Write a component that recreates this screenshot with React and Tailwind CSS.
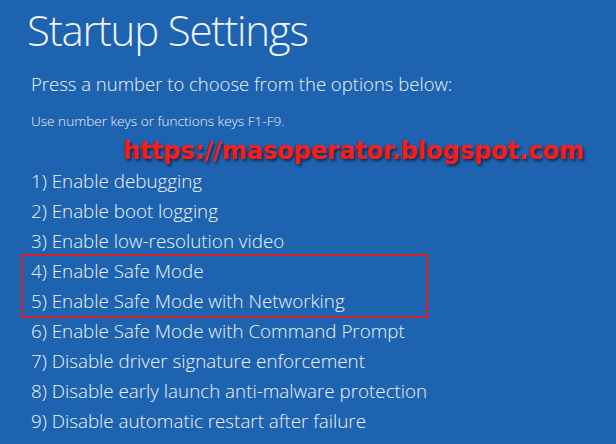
import React from "react";

const items = [
  "1) Enable debugging",
  "2) Enable boot logging",
  "3) Enable low-resolution video",
];
const boxed = ["4) Enable Safe Mode", "5) Enable Safe Mode with Networking"];
const rest = [
  "6) Enable Safe Mode with Command Prompt",
  "7) Disable driver signature enforcement",
  "8) Disable early launch anti-malware protection",
  "9) Disable automatic restart after failure",
];

export default function App() {
  return (
    <div
      className="w-[616px] h-[444px] overflow-hidden bg-[#1e63b0] text-[#eef3fa] flex flex-col"
      style={{ fontFamily: '"Open Sans", "Noto Sans", sans-serif' }}
    >
      <h1 className="pl-[27px] pt-[3px] text-[42px] leading-[53px] font-light tracking-[-1.2px]">
        Startup Settings
      </h1>
      <p className="pl-[31px] mt-[15px] text-[18.5px] leading-[26px] font-light">
        Press a number to choose from the options below:
      </p>
      <p className="pl-[31px] mt-[15px] text-[13.6px] leading-[18px] font-light">
        Use number keys or functions keys F1-F9.
      </p>
      <div className="relative h-[36px]">
        <span
          className="absolute left-[123px] top-[5px] text-[24px] leading-[32px] font-bold text-[#ff1a1a] whitespace-nowrap"
          style={{
            fontFamily: '"DejaVu Sans", Verdana, sans-serif',
            textShadow: "2px 2px 3px rgba(0,0,0,0.6)",
          }}
        >
          https://masoperator.blogspot.com
        </span>
      </div>
      <div className="flex flex-col text-[18.8px] leading-[30px] font-light">
        {items.map((t) => (
          <div key={t} className="pl-[31px]">{t}</div>
        ))}
        <div className="ml-[21px] w-[407px] border-2 border-[#d0202a] py-0 -my-[2px]">
          {boxed.map((t) => (
            <div key={t} className="pl-[8px]">{t}</div>
          ))}
        </div>
        {rest.map((t) => (
          <div key={t} className="pl-[31px]">{t}</div>
        ))}
      </div>
    </div>
  );
}
